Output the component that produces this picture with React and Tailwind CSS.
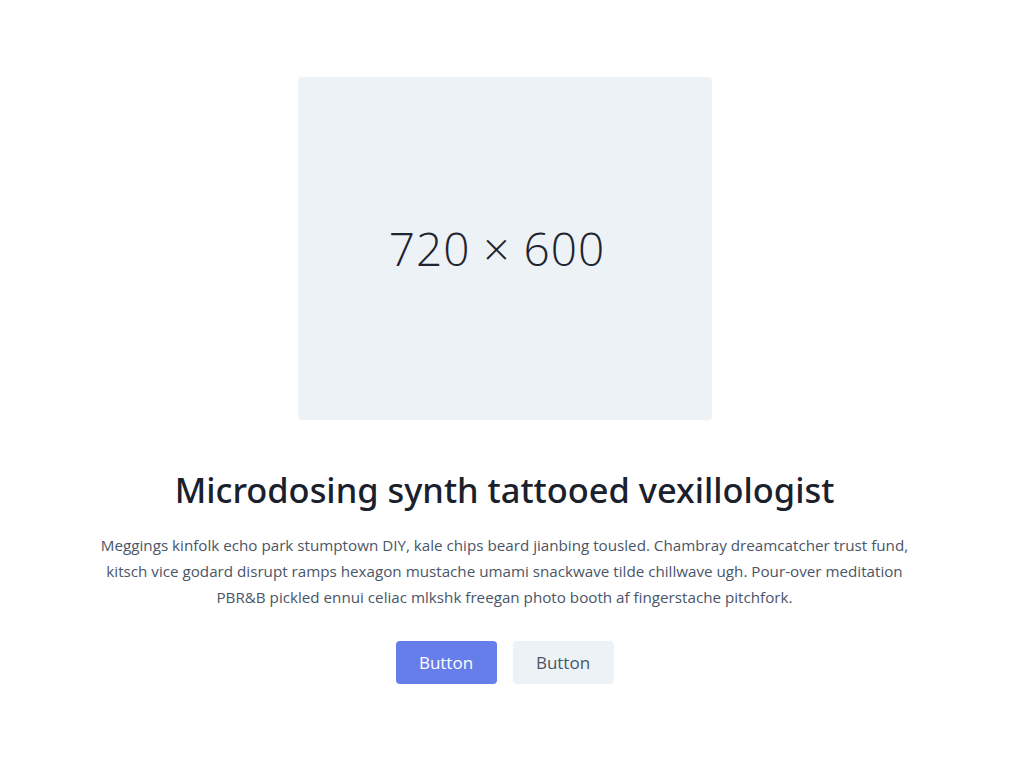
export default function App() {
  return (
    <section className="bg-white text-[#4a5568] font-['Open_Sans','Noto_Sans',sans-serif]">
      <div className="mx-auto flex flex-col items-center px-5 pt-[77px] pb-24">
        <div className="w-[414px] h-[343px] mb-[50px] rounded bg-[#edf2f7] flex items-center justify-center">
          <span className="mr-[15px] text-[46px] font-light text-[#1f2530] tracking-[1px]">720 × 600</span>
        </div>
        <div className="w-full max-w-[822px] text-center">
          <h1 className="font-['Noto_Sans','Open_Sans',sans-serif] text-[34.4px] leading-10 font-medium text-[#1a202c] mb-[22px]">
            Microdosing synth tattooed vexillologist
          </h1>
          <p className="text-[15.2px] leading-[26px] mb-[31px]">
            Meggings kinfolk echo park stumptown DIY, kale chips beard jianbing tousled. Chambray dreamcatcher trust fund,
            kitsch vice godard disrupt ramps hexagon mustache umami snackwave tilde chillwave ugh. Pour-over meditation
            PBR&amp;B pickled ennui celiac mlkshk freegan photo booth af fingerstache pitchfork.
          </p>
          <div className="flex justify-center">
            <button className="inline-flex w-[101px] h-[43px] items-center justify-center text-white bg-[#667eea] rounded text-[17px]">
              Button
            </button>
            <button className="ml-4 inline-flex w-[101px] h-[43px] items-center justify-center text-[#4a5568] bg-[#edf2f7] rounded text-[17px]">
              Button
            </button>
          </div>
        </div>
      </div>
    </section>
  )
}
